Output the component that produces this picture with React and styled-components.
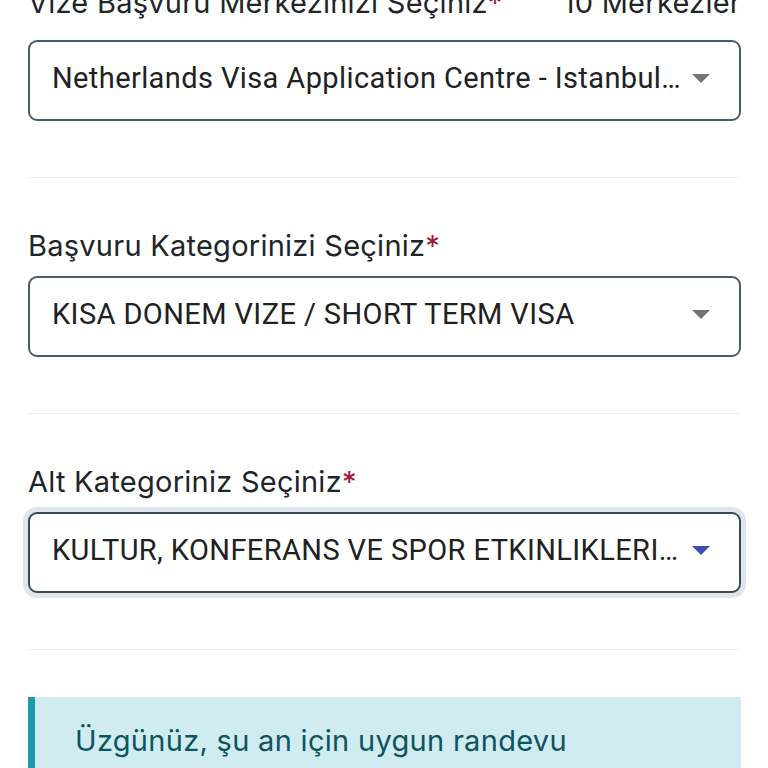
import React from 'react';
import styled, { createGlobalStyle } from 'styled-components';

const GlobalStyle = createGlobalStyle`
  html, body {
    margin: 0;
    padding: 0;
    background: #ffffff;
    overflow: hidden;
  }
  * {
    box-sizing: border-box;
  }
`;

const Page = styled.div`
  width: 768px;
  height: 768px;
  overflow: hidden;
  background: #ffffff;
`;

// the page is scrolled a little, so the first label is cut at the top
const Form = styled.div`
  margin-top: -15px;
  padding: 0 27px 0 28px;
  font-family: Inter, 'Noto Sans', sans-serif;
`;

const LabelRow = styled.div`
  display: flex;
  justify-content: space-between;
  align-items: baseline;
  margin-bottom: ${(props) => props.gap || '12px'};
`;

const Label = styled.label`
  font-size: 29px;
  line-height: 36px;
  letter-spacing: 0.25px;
  color: #212529;
`;

const Star = styled.span`
  color: #a3123a;
`;

const Count = styled.span`
  font-size: 29px;
  line-height: 36px;
  letter-spacing: 0.25px;
  color: #212529;
`;

const SelectBox = styled.div`
  height: 81px;
  display: flex;
  align-items: center;
  padding: 0 29px 5px 22px;
  border: 2px solid ${(props) => (props.focused ? '#3b4954' : '#4d5b66')};
  border-radius: 9px;
  background: #ffffff;
  box-shadow: ${(props) => (props.focused ? '0 0 0 5px #dfe5ec' : 'none')};
`;

const Value = styled.span`
  flex: 1;
  min-width: 0;
  font-family: Roboto, 'Liberation Sans', sans-serif;
  font-size: 29px;
  letter-spacing: 0.4px;
  color: #212121;
  white-space: nowrap;
  overflow: hidden;
  text-overflow: ellipsis;
  padding-right: 8px;
`;

const Divider = styled.hr`
  border: 0;
  height: 1px;
  background: #eceeef;
  margin: 56px 0 ${(props) => props.after || '50px'};
`;

const Alert = styled.div`
  background: #d1ecf1;
  border-left: 7px solid #1c9aab;
  padding: 24px 40px 40px;
  color: #0c5460;
  font-size: 29px;
  line-height: 40px;
  letter-spacing: 0.3px;
`;

const Caret = ({ color }) => (
  <svg width="18" height="9" viewBox="0 0 18 9">
    <path d="M0 0 L18 0 L9 9 Z" fill={color} />
  </svg>
);

const Field = ({ label, count, value, focused, gap }) => (
  <>
    <LabelRow gap={gap}>
      <Label>
        {label}
        <Star>*</Star>
      </Label>
      {count && <Count>{count}</Count>}
    </LabelRow>
    <SelectBox focused={focused}>
      <Value>{value}</Value>
      <Caret color={focused ? '#3f4cb8' : '#737373'} />
    </SelectBox>
  </>
);

const App = () => (
  <Page>
    <GlobalStyle />
    <Form>
      <Field
        label="Vize Başvuru Merkezinizi Seçiniz"
        count="10 Merkezler"
        value="Netherlands Visa Application Centre - Istanbul…"
        gap="19px"
      />
      <Divider />
      <Field
        label="Başvuru Kategorinizi Seçiniz"
        value="KISA DONEM VIZE / SHORT TERM VISA"
      />
      <Divider />
      <Field
        label="Alt Kategoriniz Seçiniz"
        value="KULTUR, KONFERANS VE SPOR ETKINLIKLERI…"
        focused
      />
      <Divider after="47px" />
      <Alert>Üzgünüz, şu an için uygun randevu bulunmamaktadır.</Alert>
    </Form>
  </Page>
);

export default App;
